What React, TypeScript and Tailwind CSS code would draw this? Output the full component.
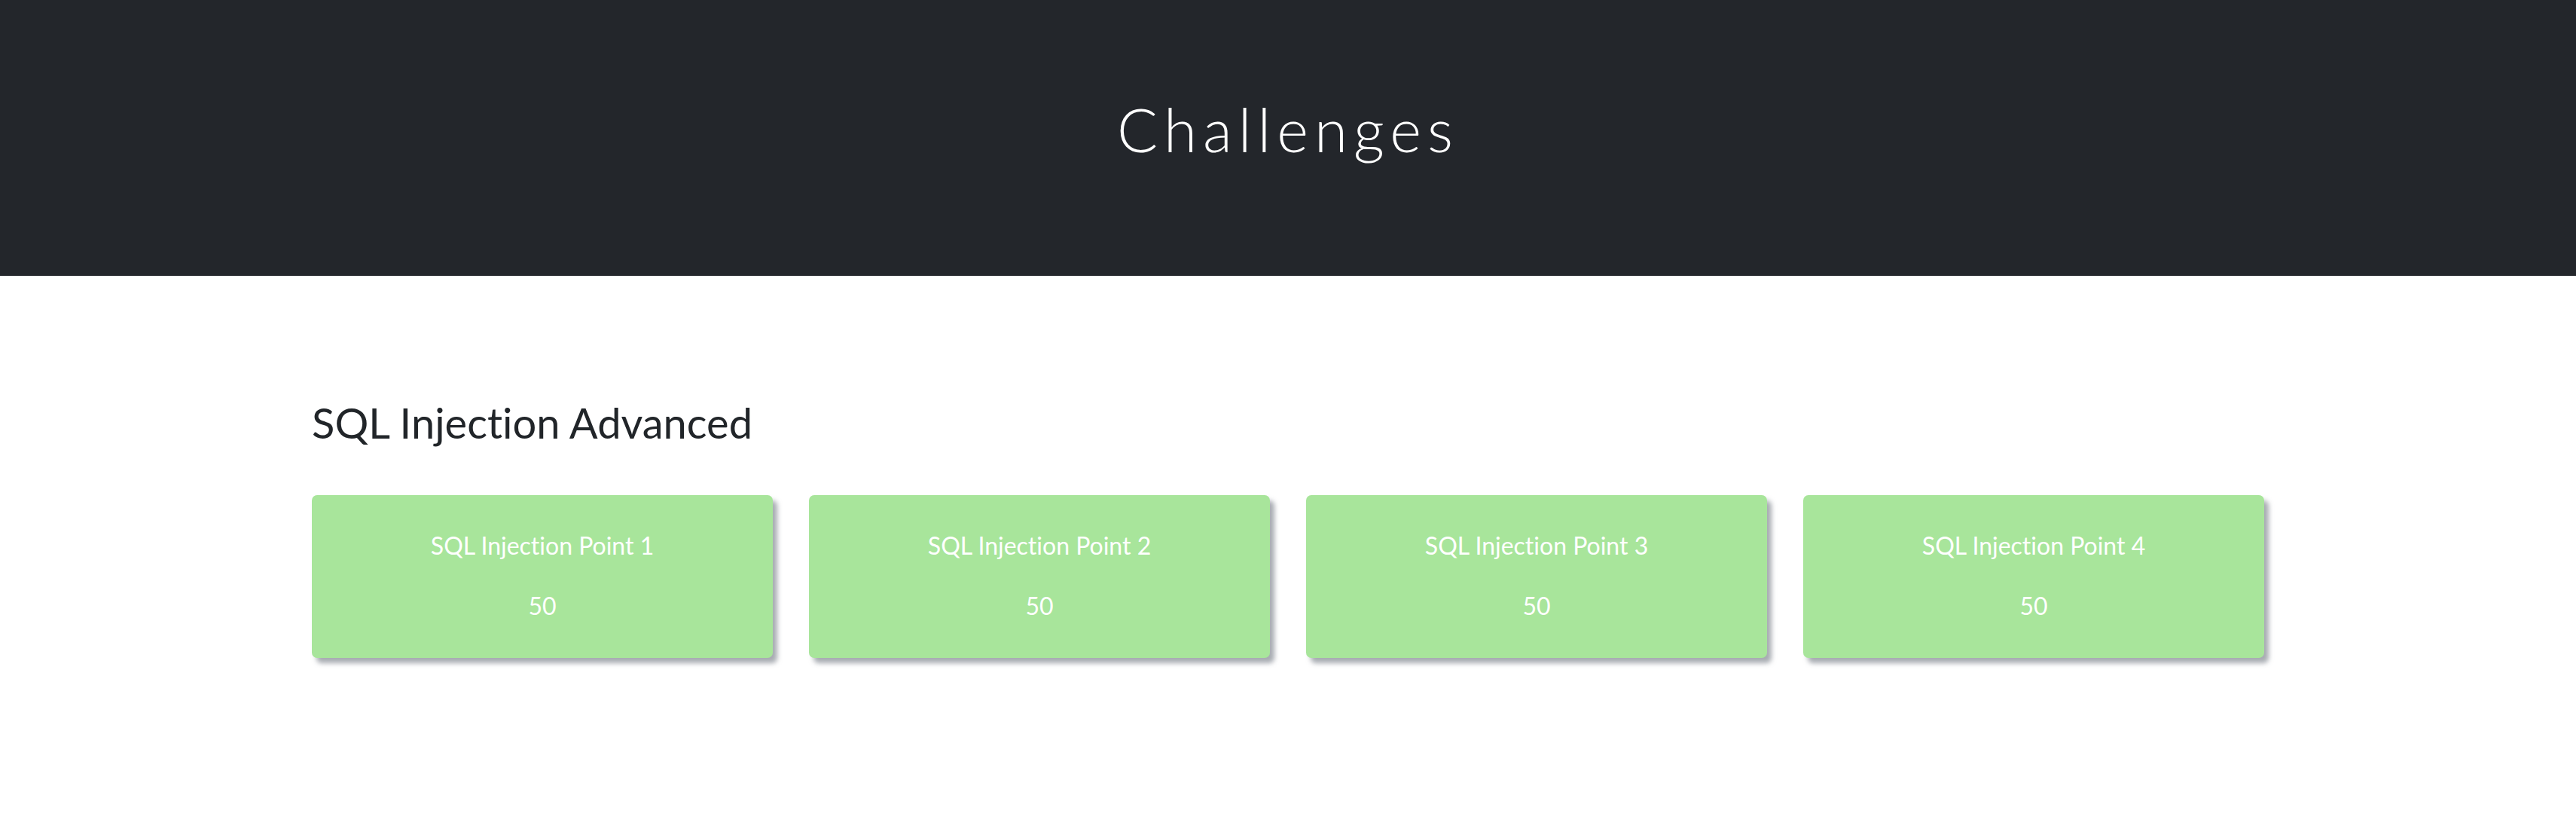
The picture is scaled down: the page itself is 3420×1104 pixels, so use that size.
const challenges = [
  { name: "SQL Injection Point 1", value: 50 },
  { name: "SQL Injection Point 2", value: 50 },
  { name: "SQL Injection Point 3", value: 50 },
  { name: "SQL Injection Point 4", value: 50 },
];

export default function App() {
  return (
    <div className="min-h-[1104px] bg-white font-['Lato','Liberation_Sans',sans-serif] [font-variant-ligatures:none]">
      {/* Jumbotron */}
      <div className="h-[366px] bg-[#23262b] pt-[123px]">
        <h1 className="text-center text-[80px] leading-[96px] font-light tracking-[8px] text-white">Challenges</h1>
      </div>

      <div className="w-[2592px] mx-auto pt-[161px]">
        <h3 className="text-[56px] leading-[67px] text-[#212529]">SQL Injection Advanced</h3>

        <div className="grid grid-cols-4 gap-[48px] mt-[63px]">
          {challenges.map((c) => (
            <div
              key={c.name}
              className="h-[216px] rounded-[7px] bg-[#a8e59b] pt-[43px] text-center text-white text-[32px] leading-[48px] shadow-[6px_7px_6px_rgba(110,116,126,0.6)]"
            >
              <p>{c.name}</p>
              <p className="mt-[32px]">{c.value}</p>
            </div>
          ))}
        </div>
      </div>
    </div>
  );
}
